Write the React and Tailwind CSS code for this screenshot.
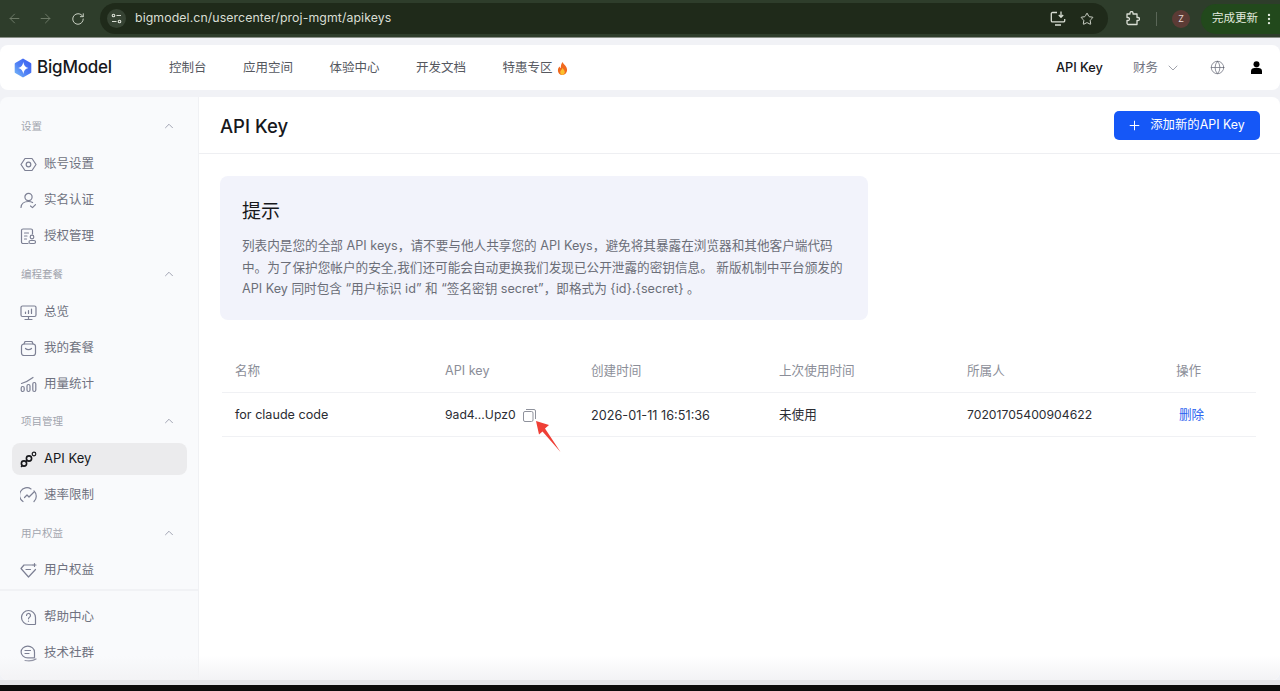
import React from 'react';
import { ArrowLeft, ArrowRight, RotateCw, Star, ChevronUp, ChevronDown, Globe, Plus, EllipsisVertical } from 'lucide-react';

const Ico = ({ children, active }) => (
  <svg
    width="17"
    height="17"
    viewBox="0 0 17 17"
    fill="none"
    stroke={active ? '#17181c' : '#7d8094'}
    strokeWidth="1.2"
    strokeLinecap="round"
    strokeLinejoin="round"
    className="shrink-0"
  >
    {children}
  </svg>
);

const icons = {
  account: (
    <>
      <path d="M5 2.500h7l4 6-4 6H5l-4-6z" />
      <circle cx="8.500" cy="8.500" r="2.300" />
    </>
  ),
  verify: (
    <>
      <circle cx="8.500" cy="5" r="3.600" />
      <path d="M1 15.500c.3-3.600 3-6 7.500-6 1.600 0 3 .3 4.100 1" />
      <path d="M10.500 14l2 1.600 3-3" />
    </>
  ),
  auth: (
    <>
      <path d="M8 15.500H3a1.500 1.500 0 0 1-1.500-1.500V2.500A1.500 1.500 0 0 1 3 1h8a1.500 1.500 0 0 1 1.500 1.500V6" />
      <path d="M4.500 5h4M4.500 8h2.500M4.500 11h2" />
      <circle cx="12" cy="9" r="1.800" />
      <rect x="9" y="12.500" width="6.500" height="3" rx="1.500" />
    </>
  ),
  overview: (
    <>
      <rect x="1" y="2" width="15" height="10.500" rx="1.500" />
      <path d="M8.500 12.500v3M5 15.500h7M5.500 9.500V8M8.500 9.500V6.500M11.500 9.500V5" />
    </>
  ),
  plan: (
    <>
      <rect x="1.500" y="4" width="14" height="11.500" rx="2.500" />
      <path d="M4 4l1-2.500h7L13 4M5.500 8.500c1.500 1.600 4.500 1.600 6 0" />
    </>
  ),
  usage: (
    <>
      <rect x="1.200" y="10.500" width="3" height="5" rx="1.500" />
      <rect x="7" y="8.500" width="3" height="7" rx="1.500" />
      <rect x="12.800" y="6.500" width="3" height="9" rx="1.500" />
      <path d="M1.500 7.500C5 6.500 9 4.500 13 1.500" />
    </>
  ),
  key: (
    <>
      <circle cx="4" cy="12.500" r="2.600" strokeWidth="1.600" />
      <circle cx="9" cy="7.500" r="2.600" strokeWidth="1.600" />
      <circle cx="14" cy="3" r="1.800" />
      <path d="M1.500 15.500l1-1M6 10.500l1-1" strokeWidth="1.600" />
    </>
  ),
  limit: (
    <>
      <path d="M3 14.500A7.200 7.200 0 0 1 11 1.900M14 4a7.200 7.200 0 0 1 0 10.500" />
      <path d="M4.500 10.500L7 8l2 2 4.500-4.500" />
    </>
  ),
  rights: (
    <>
      <path d="M13 3H4L1 6.500l7.500 8.500 7-7.500" />
      <path d="M6 7.500h4.500M14.500 1.500v3M13 3h3" />
    </>
  ),
  help: (
    <>
      <path d="M15.500 8.500a7 7 0 1 0-7 7H15a.5.5 0 0 0 .5-.5z" />
      <path d="M6.500 6.500a2 2 0 1 1 3 1.700c-.7.4-1 .8-1 1.600" />
      <path d="M8.500 12v.2" />
    </>
  ),
  chat: (
    <>
      <path d="M14.500 7a6.700 5.800 0 1 0-6.700 5.800H14.500z" />
      <path d="M5 5.500h5.500M5 8.500h4M5 15.500c3 .5 8 .5 11-1.500" />
    </>
  ),
};

const Item = ({ icon, label, active }) => (
  <div className={`flex h-8 items-center gap-[7px] rounded-lg pl-2 ${active ? 'bg-[#ebebed] text-[13px] text-[#17181c]' : 'text-[12.5px] text-[#6f7280]'}`}>
    <Ico active={active}>{icons[icon]}</Ico>
    <span>{label}</span>
  </div>
);

const Section = ({ title, className = '', children }) => (
  <div className={className}>
    <div className="flex h-[42px] items-center justify-between pl-[9px] pr-[11px] pt-[2px] text-[10.5px] text-[#a2a5ae]">
      <span>{title}</span>
      <ChevronUp size={14} strokeWidth={1.2} className="-mt-[2px] text-[#7d8094]" />
    </div>
    <div className="space-y-1">{children}</div>
  </div>
);

const Logo = () => (
  <svg width="18" height="20" viewBox="0 0 18 20" className="shrink-0">
    <defs>
      <linearGradient id="lg" x1="1" y1="0" x2="0" y2="1">
        <stop offset="0" stopColor="#3a5cf0" />
        <stop offset="0.55" stopColor="#4f7ff5" />
        <stop offset="1" stopColor="#7cc0f7" />
      </linearGradient>
    </defs>
    <path d="M9 .5l7.800 4.400a1 1 0 0 1 .5.9v8.400a1 1 0 0 1-.5.9L9 19.500 1.200 15.100a1 1 0 0 1-.5-.9V5.800a1 1 0 0 1 .5-.9z" fill="url(#lg)" />
    <path d="M9.300 4c.6 3.500 1.900 5.200 5 6-3.100.8-4.400 2.500-5 6-.6-3.500-2-5.200-5.100-6 3.100-.8 4.500-2.500 5.100-6z" fill="#fff" />
  </svg>
);

const Flame = () => (
  <svg width="11" height="13" viewBox="0 0 12 14">
    <path d="M6.200 0c.5 2.500 4.800 4.400 4.800 8.400C11 11.500 8.800 14 6 14S1 11.700 1 8.800c0-1.900 1-3.100 1.800-4 .2 1 .6 1.600 1.300 1.900C4 4.200 4.700 1.600 6.200 0z" fill="#f0691e" />
    <path d="M6.100 6.500c.4 1.300 2.400 2.300 2.400 4.400C8.500 12.500 7.400 14 6 14s-2.500-1.300-2.500-2.900c0-2 2.100-2.800 2.600-4.600z" fill="#fbc02d" />
  </svg>
);

const Browser = () => (
  <div className="flex h-[38px] shrink-0 items-center border-b border-[#8a9088] bg-[#2e3d2b] text-[#d9ded4]">
    <div className="flex w-[100px] items-center pl-[7px] text-[#6f7c6a]">
      <ArrowLeft size={15} strokeWidth={1.5} />
      <ArrowRight size={15} strokeWidth={1.5} className="ml-4" />
      <RotateCw size={14} strokeWidth={1.7} className="ml-[18px] text-[#c9d0c3]" />
    </div>
    <div className="flex h-[31px] w-[1008px] items-center rounded-full bg-[#1f2a1a] pl-[7px] pr-[14px]">
      <div className="flex h-[19px] w-[19px] items-center justify-center rounded-full bg-[#364333]">
        <svg width="11" height="11" viewBox="0 0 11 11" fill="none" stroke="#d9ded4" strokeWidth="1.100">
          <circle cx="2.500" cy="2.500" r="1.300" />
          <path d="M5.500 2.500H10M1 8.500h4.500" />
          <circle cx="8.500" cy="8.500" r="1.300" />
        </svg>
      </div>
      <span className="ml-[9px] font-['Inter',sans-serif] text-[12.3px] tracking-[0.1px]">bigmodel.cn/usercenter/proj-mgmt/apikeys</span>
      <div className="ml-auto flex items-center gap-[14px]">
        <svg width="16" height="15" viewBox="0 0 16 15" fill="none" stroke="#d9ded4" strokeWidth="1.300" strokeLinejoin="round">
          <path d="M7 1.500H2.500a1.200 1.200 0 0 0-1.200 1.200v7a1.200 1.200 0 0 0 1.200 1.200h11a1.200 1.200 0 0 0 1.200-1.200V8M5 14h6M11 .5V6M8.800 4l2.200 2.200L13.200 4" />
        </svg>
        <Star size={14} strokeWidth={1.6} />
      </div>
    </div>
    {/* chrome extensions button */}
    <svg width="15" height="15" viewBox="0 0 15 15" fill="none" stroke="#d9ded4" strokeWidth="1.300" strokeLinejoin="round" className="ml-[17px]">
      <path d="M2 3h3V2a1.500 1.500 0 0 1 3 0v1h4v3.500h1a1.500 1.500 0 0 1 0 3h-1V13.500H3.500A1.500 1.500 0 0 1 2 12V9.500h1a1.500 1.500 0 0 0 0-3H2z" />
    </svg>
    <div className="ml-[16px] h-[14px] w-px bg-[#5a6657]" />
    <div className="ml-[15px] flex h-[18px] w-[18px] items-center justify-center rounded-full bg-[#5c3b35] font-['Inter',sans-serif] text-[9px] text-[#e8dcd8]">Z</div>
    <div className="ml-[11px] flex h-[30px] flex-1 items-center rounded-l-full bg-[#22491c] pl-[11px] text-[11.5px] text-[#e3ebdf]">
      <span>完成更新</span>
      <EllipsisVertical size={14} className="ml-1" />
    </div>
  </div>
);

const Navbar = () => (
  <div className="flex h-[45px] shrink-0 items-center rounded-lg bg-white pl-[14px] pr-[18px] text-[12.5px] text-[#55585f]">
    <Logo />
    <span className="ml-[5px] w-[132px] text-[17px] font-medium tracking-[-0.2px] text-[#17181c]">BigModel</span>
    <div className="flex items-center gap-[36.5px] pt-[2px]">
      <span>控制台</span>
      <span>应用空间</span>
      <span>体验中心</span>
      <span>开发文档</span>
      <span className="flex items-center gap-1">特惠专区 <Flame /></span>
    </div>
    <span className="ml-auto text-[12.8px] font-medium text-[#17181c]">API Key</span>
    <span className="ml-[30px] pt-[2px] text-[#6f7280]">财务</span>
    <ChevronDown size={16} strokeWidth={1} className="ml-[7px] text-[#6f7280]" />
    <Globe size={15} strokeWidth={1.1} className="ml-[29px] text-[#5f6270]" />
    <svg width="11" height="13" viewBox="0 0 11 13" className="ml-[26px]" fill="#000">
      <circle cx="5.500" cy="3.300" r="3" />
      <path d="M0 13v-3c0-2 2-3.200 5.500-3.200S11 8 11 10v3z" />
    </svg>
  </div>
);

const Sidebar = () => (
  <aside className="flex w-[199px] shrink-0 flex-col border-r border-[#f0f1f4] bg-[#f9fafc] pt-2">
    <div className="pl-3 pr-[11px]">
      <Section title="设置" className="[&>div:last-child]:mt-px">
        <Item icon="account" label="账号设置" />
        <Item icon="verify" label="实名认证" />
        <Item icon="auth" label="授权管理" />
      </Section>
      <Section title="编程套餐" className="mt-px [&>div:last-child]:mt-px">
        <Item icon="overview" label="总览" />
        <Item icon="plan" label="我的套餐" />
        <Item icon="usage" label="用量统计" />
      </Section>
      <Section title="项目管理" className="[&>div:last-child]:mt-px">
        <Item icon="key" label="API Key" active />
        <Item icon="limit" label="速率限制" />
      </Section>
      <Section title="用户权益" className="mt-px">
        <Item icon="rights" label="用户权益" />
      </Section>
    </div>
    <div className="mt-[3px] border-t-2 border-[#f1f2f5] pl-3 pr-[11px] pt-[10px]">
      <div className="space-y-1">
        <Item icon="help" label="帮助中心" />
        <Item icon="chat" label="技术社群" />
      </div>
    </div>
  </aside>
);

const cols = 'grid grid-cols-[210px_146px_188px_188px_209px_1fr] items-center pl-[13px] pt-[2px]';

const Main = () => (
  <main className="min-w-0 flex-1 bg-white">
    <div className="flex h-[57px] items-center justify-between border-b border-[#eeeff2] pl-[21px] pr-5">
      <h1 className="mt-[4px] text-[18.5px] font-medium text-[#17181c]">API Key</h1>
      <button className="flex h-[29px] w-[146px] items-center justify-center gap-2 rounded-[5px] bg-[#1557f7] pr-[2px] pt-px text-[12.4px] text-white">
        <Plus size={15} strokeWidth={1.6} />
        添加新的API Key
      </button>
    </div>
    <div className="pl-[21px] pr-6 pt-[22px]">
      <div className="w-[648px] rounded-lg bg-[#f2f3fb] px-[22px] pb-[20.5px] pt-[22px]">
        <h2 className="text-[19px] leading-[28px] text-[#17181c]">提示</h2>
        <p className="mt-[9px] whitespace-nowrap text-[12.63px] leading-[21.5px] text-[#6b6e78]">
          列表内是您的全部 API keys，请不要与他人共享您的 API Keys，避免将其暴露在浏览器和其他客户端代码<br />
          中。为了保护您帐户的安全,我们还可能会自动更换我们发现已公开泄露的密钥信息。 新版机制中平台颁发的<br />
          API Key 同时包含 “用户标识 id” 和 “签名密钥 secret”，即格式为 {'{id}.{secret}'} 。
        </p>
      </div>
      <div className="relative ml-[2px] mt-[29px] text-[12.6px]">
        <div className={`${cols} h-[44px] border-b border-[#f0f1f4] text-[#8b8e98]`}>
          <span>名称</span>
          <span>API key</span>
          <span>创建时间</span>
          <span>上次使用时间</span>
          <span>所属人</span>
          <span>操作</span>
        </div>
        <div className={`${cols} h-[44px] border-b border-[#f0f1f4] text-[#2b2d33]`}>
          <span>for claude code</span>
          <span className="flex items-center gap-[7px] text-[12.2px]">
            9ad4...Upz0
            <svg width="13" height="13" viewBox="0 0 13 13" fill="none" stroke="#8f929c" strokeWidth="1">
              <rect x=".5" y="2.500" width="9.500" height="10" rx="1.500" />
              <path d="M3 .5h8a1.500 1.500 0 0 1 1.500 1.500v8" />
            </svg>
          </span>
          <span className="text-[12.7px]">2026-01-11 16:51:36</span>
          <span>未使用</span>
          <span className="text-[12.2px]">70201705400904622</span>
          <span className="pl-[3px] text-[#2b63f0]">删除</span>
        </div>
        {/* red annotation arrow over the copy icon */}
        <svg width="26" height="32" viewBox="0 0 26 32" className="absolute left-[314px] top-[72px]">
          <path d="M0 0l13 4-4 3.500L24.500 31 6.500 10.500 3 13.500z" fill="#ef3f36" />
        </svg>
      </div>
    </div>
  </main>
);

export default function App() {
  return (
    <div className="flex h-[691px] flex-col overflow-hidden bg-[#f1f2f6] font-['Inter','Noto_Sans_CJK_SC',sans-serif]">
      <Browser />
      <div className="h-[7px] shrink-0" />
      <Navbar />
      <div className="h-[7px] shrink-0" />
      <div className="relative flex min-h-0 flex-1 overflow-hidden rounded-lg">
        <Sidebar />
        <Main />
        {/* soft fade at the bottom edge */}
        <div className="pointer-events-none absolute inset-x-0 bottom-0 h-6 bg-gradient-to-b from-transparent to-[#f3f3f5]" />
      </div>
      <div className="h-[5px] shrink-0 bg-[#e3e4e8]" />
      <div className="h-[6px] shrink-0 bg-[#0b0b0b]" />
    </div>
  );
}
